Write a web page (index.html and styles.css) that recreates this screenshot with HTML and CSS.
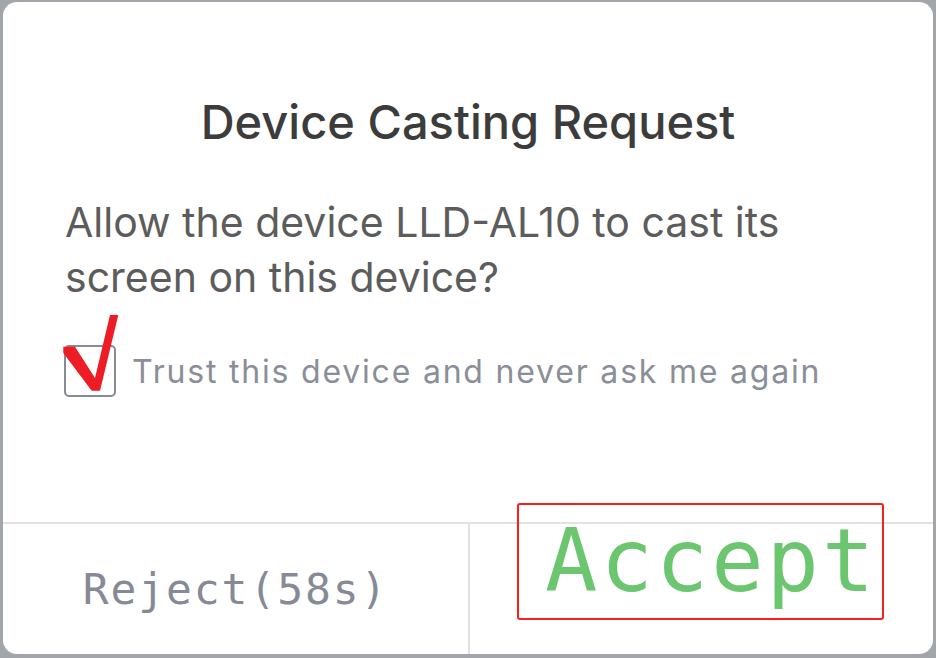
FILE: index.html
```html
<!DOCTYPE html>
<html>
<head>
<meta charset="utf-8">
<link rel="stylesheet" href="styles.css">
</head>
<body>
<div class="card">
  <h1 class="title">Device Casting Request</h1>
  <p class="message">Allow the device LLD-AL10 to cast its screen on this device?</p>
  <label class="trust">
    <span class="box">
      <svg class="tick" width="60" height="82" viewBox="60 312 60 82">
        <polygon points="63.3,346.7 75,346.7 95,378 110,315 118.3,315 100,390.7 91.7,390.7 63.3,353" fill="#ee1c25"/>
      </svg>
    </span>
    <span class="trust-text">Trust this device and never ask me again</span>
  </label>
  <div class="spacer"></div>
  <div class="actions">
    <button class="btn reject">Reject(58s)</button>
    <button class="btn accept">Accept<span class="mark"></span></button>
  </div>
</div>
</body>
</html>
```
FILE: styles.css
```css
html, body {
  margin: 0;
  padding: 0;
  height: 100%;
}
body {
  background: #a2a5aa;
  padding: 2px 3px 4px 3px;
  box-sizing: border-box;
  font-family: Inter, Roboto, "Noto Sans", sans-serif;
}
.card {
  background: #ffffff;
  border-radius: 14px;
  height: 100%;
  display: flex;
  flex-direction: column;
  overflow: hidden;
}
.title {
  margin: 94px 0 0 0;
  text-align: center;
  font-size: 47px;
  font-weight: 500;
  line-height: 52px;
  color: #3c3c3c;
}
.message {
  margin: 47px 0 0 0;
  padding: 0 100px 0 62px;
  font-size: 41px;
  line-height: 55px;
  color: #5c5c5c;
}
.trust {
  margin: 40px 0 0 61px;
  display: flex;
  align-items: center;
  gap: 16px;
}
.box {
  position: relative;
  width: 48px;
  height: 48px;
  border: 2.5px solid #878b95;
  border-radius: 5px;
  flex: none;
}
.tick {
  position: absolute;
  left: -6px;
  top: -35px;
}
.trust-text {
  font-size: 32px;
  color: #8a8e99;
  letter-spacing: 1.8px;
}
.spacer {
  flex: 1;
}
.actions {
  display: grid;
  grid-template-columns: 467px 1fr;
  height: 130px;
  border-top: 2px solid #e2e2e2;
}
.btn {
  border: 0;
  background: transparent;
  font-family: "DejaVu Sans Mono", monospace;
  padding: 0;
  position: relative;
  display: block;
}
.reject {
  font-size: 43px;
  line-height: 43px;
  letter-spacing: 1.9px;
  color: #868a96;
  border-right: 2px solid #e2e2e2;
  align-self: stretch;
}
.accept {
  font-size: 87px;
  line-height: 75px;
  letter-spacing: 3px;
  color: #6cc66f;
  text-align: left;
  padding-left: 75px;
  align-self: start;
}
.mark {
  position: absolute;
  left: 47px;
  top: -21px;
  width: 363px;
  height: 113px;
  border: 2px solid #ff1c1c;
  border-radius: 3px;
}
```
